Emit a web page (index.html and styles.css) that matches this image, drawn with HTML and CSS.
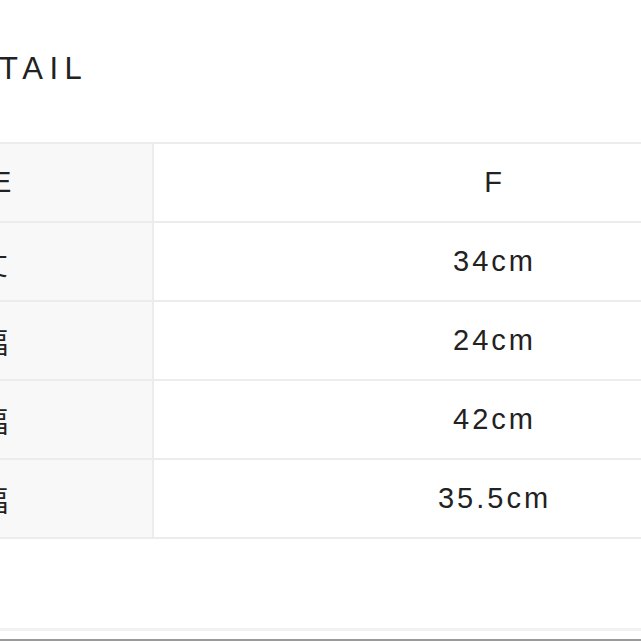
FILE: index.html
```html
<!DOCTYPE html>
<html lang="ja">
<head>
<meta charset="utf-8">
<title>DETAIL</title>
<link rel="stylesheet" href="styles.css">
</head>
<body>
<div class="page">
  <h2 class="title">DETAIL</h2>
  <table class="size-table">
    <tr><th>SIZE</th><td>F</td></tr>
    <tr><th>着丈</th><td>34cm</td></tr>
    <tr><th>肩幅</th><td>24cm</td></tr>
    <tr><th>身幅</th><td>42cm</td></tr>
    <tr><th>袖幅</th><td>35.5cm</td></tr>
  </table>
  <div class="footer-line"></div>
</div>
</body>
</html>
```
FILE: styles.css
```css
html, body {
  margin: 0;
  padding: 0;
  background: #fff;
  overflow: hidden;
  width: 641px;
  height: 641px;
}
.page {
  position: relative;
  width: 641px;
  height: 641px;
  font-family: "Liberation Sans", "Noto Sans CJK JP", sans-serif;
  color: #222;
}
.title {
  margin: 0;
  padding-top: 51px;
  margin-left: -57px;
  font-size: 31px;
  font-weight: 400;
  letter-spacing: 6.5px;
  line-height: 36px;
  box-sizing: border-box;
  height: 142px;
}
.size-table {
  margin-left: -196px;
  border-collapse: collapse;
  width: 1030px;
  table-layout: fixed;
}
.size-table th,
.size-table td {
  height: 77px;
  padding: 0;
  border: 2px solid #ececec;
  font-size: 29px;
  font-weight: 400;
  text-align: center;
  vertical-align: middle;
}
.size-table th {
  width: 346px;
  background: #f8f8f8;
}
.size-table td {
  letter-spacing: 3px;
  padding-left: 3px;
}
.footer-line {
  position: absolute;
  left: 0;
  right: 0;
  bottom: 0;
  height: 13px;
  border-top: 3px solid #f1f1f1;
  border-bottom: 2px solid #9a9a9a;
  box-sizing: border-box;
}
```
